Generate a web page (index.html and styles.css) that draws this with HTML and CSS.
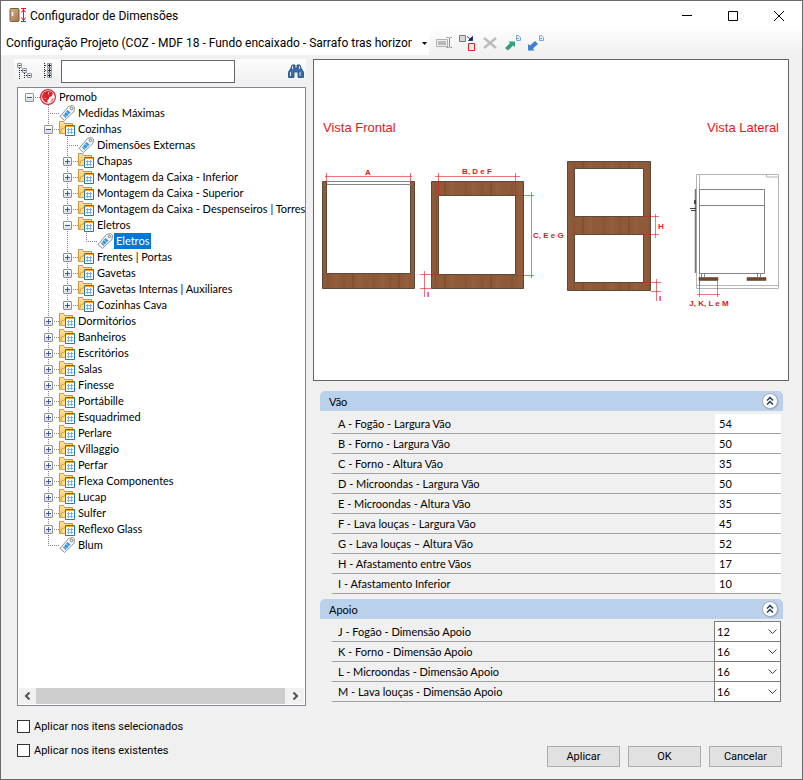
FILE: index.html
```html
<!DOCTYPE html>
<html lang="pt-BR">
<head>
    <meta charset="utf-8">
    <title>Configurador de Dimensões</title>
    <link rel="stylesheet" href="styles.css">
</head>
<body>
    <!-- Shared icons -->
    <svg class="sprites" aria-hidden="true">
        <defs>
            <linearGradient id="folder-fill" x1="0" y1="0" x2="0" y2="1">
                <stop offset="0" stop-color="#ffe79a"/>
                <stop offset="1" stop-color="#f5bd4a"/>
            </linearGradient>
            <linearGradient id="door-fill" x1="0" y1="0" x2="1" y2="1">
                <stop offset="0" stop-color="#d6b995"/>
                <stop offset="1" stop-color="#9c7346"/>
            </linearGradient>
            <symbol id="folder" viewBox="0 0 16 16">
                <path d="M.5 12.500V.500h4l1 2h8v10z" fill="url(#folder-fill)" stroke="#cf963a"/>
                <path d="M1.500 12.500l1.500-5h2l1-1.500h8v6.500z" fill="#ffdf80" stroke="#dba548"/>
                <path d="M6.500 4.500h9v10h-9z" fill="#fff" stroke="#1480bd"/>
                <path d="M7 5.500h8" stroke="#f0a53a"/>
                <path d="M9.500 7v6M12.500 7v6M8 8.500h6M8 11.500h6" stroke="#7fb2e0" fill="none"/>
            </symbol>
            <symbol id="tag" viewBox="0 0 16 16">
                <path d="M9.500 1.500l4-1 2 1.500-.5 4.500L5.500 15.500 1 11.500z" fill="#f3f4f5" stroke="#8f9294"/>
                <path d="M4 10.500l4.500-5.500 3 2.500-5 5.500z" fill="#3294d2"/>
                <path d="M5 9.500l3 2.500M7 7l3 2.500" stroke="#a9d5f1"/>
                <circle cx="12.500" cy="3.500" r="1.200" fill="#fff" stroke="#77797b"/>
            </symbol>
            <symbol id="globe" viewBox="0 0 16 16">
                <circle cx="8" cy="8" r="7.400" fill="#fff" stroke="#d8232c" stroke-width="1.200"/>
                <path d="M8.500 2C4 2 2 4.500 2.200 8.500 3 12 5 13.500 7.500 13.800L7.500 11l1.500-1V8l2.500-.5 1.500-3C12 3 10.500 2 8.500 2z" fill="#d8232c"/>
                <path d="M10 13.300c2.200-.6 3.500-2 3.800-4.300l-1.800.5z" fill="#e8757a"/>
                <path d="M8.500 3v2.500M4.500 9l1.500 1" stroke="#f5b5b8"/>
            </symbol>
            <symbol id="chevrons" viewBox="0 0 18 18">
                <circle cx="9.500" cy="9.500" r="8" fill="#9aa5b8"/>
                <circle cx="9" cy="9" r="7.500" fill="#fff" stroke="#a3aab8"/>
                <path d="M6 8.500l3-3 3 3M6 12.500l3-3 3 3" fill="none" stroke="#1d3768" stroke-width="1.500"/>
            </symbol>
            <pattern id="wood" width="46" height="130" patternUnits="userSpaceOnUse">
                <rect width="46" height="130" fill="#8f5a39"/>
                <path d="M6 0v130M22 0v130" stroke="#8a5534" stroke-width="3"/>
                <path d="M14 0v130M38 0v130" stroke="#935e3d" stroke-width="5"/>
                <path d="M31 0v130" stroke="#855030" stroke-width="2"/>
            </pattern>
        </defs>
    </svg>

    <div class="window">
        <header class="titlebar">
            <svg class="app-icon" viewBox="0 0 18 18">
                <rect x="1" y="1.500" width="9" height="13" rx="1" fill="url(#door-fill)" stroke="#7c5c3c"/>
                <path d="M3.500 5v4" stroke="#f6f6f6" stroke-width="1.500"/>
                <path d="M12 1.500h5M12 14.500h5M14.500 2v12M12.500 5.500l2-3 2 3M12.500 10.500l2 3 2-3" stroke="#e0142c" fill="none"/>
            </svg>
            <h1>Configurador de Dimensões</h1>
            <button class="caption" aria-label="Minimizar"><svg viewBox="0 0 10 10"><path d="M0 4.500h10"/></svg></button>
            <button class="caption" aria-label="Maximizar"><svg viewBox="0 0 10 10"><path d="M.5.5h9v9h-9z"/></svg></button>
            <button class="caption" aria-label="Fechar"><svg viewBox="0 0 10 10"><path d="M0 0l10 10M10 0L0 10"/></svg></button>
        </header>

        <div class="toolbar">
            <div class="project">
                <select aria-label="Configuração">
                    <option>Configuração Projeto (COZ - MDF 18 - Fundo encaixado - Sarrafo tras horizontal)</option>
                </select>
                <svg class="arrow" viewBox="0 0 5 3"><path d="M0 0h5L2.500 3z"/></svg>
            </div>
            <button class="tool" aria-label="Renomear">
                <svg viewBox="0 0 16 16"><path d="M.5 4.500h11v7H.5z" fill="#eee" stroke="#b0b0b0"/><path d="M2 6h8v4H2z" fill="#b9b9b9"/><path d="M10.500 2.500h2l1 .7 1-.7H16M10.500 12.500h2l1-.7 1 .7H16M13.500 3v9" fill="none" stroke="#8f8f8f"/></svg>
            </button>
            <button class="tool" aria-label="Substituir">
                <svg viewBox="0 0 16 16"><path d="M.5.5h6v6h-6z" fill="#ddd5d8" stroke="#777"/><path d="M9.500 8.500h6v7h-6z" fill="#e8e8e8" stroke="#ec1c24"/><path d="M8 1.500l4 3M9.500 5.500h4v-4z" fill="#0c1c72" stroke="#0c1c72" stroke-width=".8"/></svg>
            </button>
            <button class="tool" aria-label="Excluir">
                <svg viewBox="0 0 16 16"><path d="M2 3l12 10M14 3L2 13" stroke="#bdbdbd" stroke-width="2.400"/></svg>
            </button>
            <button class="tool" aria-label="Exportar">
                <svg viewBox="0 0 16 16"><path d="M11.500.500h2l2 2v3h-4z" fill="#eaf3fc" stroke="#7ba7d6"/><path d="M12 3.500h2" stroke="#7ba7d6"/><path d="M0 13l5-5-1.500-1.500H10V12L8 10.500 3 15.500z" fill="#2ea377"/></svg>
            </button>
            <button class="tool" aria-label="Importar">
                <svg viewBox="0 0 16 16"><path d="M11.500.500h2l2 2v3h-4z" fill="#eaf3fc" stroke="#7ba7d6"/><path d="M12 3.500h2" stroke="#7ba7d6"/><path d="M0 15.500V9l2 1.500L7 6l3 3-5 4.500 1.500 2z" fill="#3f7fd0"/></svg>
            </button>
        </div>

        <main>
            <section class="left">
                <div class="searchbar">
                    <button class="tool" aria-label="Recolher tudo">
                        <svg viewBox="0 0 16 16"><path d="M2.500 5v11M7.500 10v6" stroke="#222" stroke-dasharray="1 1"/><path d="M4 7.500h2M9 12.500h2" stroke="#222" stroke-dasharray="1 1"/><path d="M.5.500h4v4h-4zM5.500 5.500h4v4h-4zM10.500 10.500h4v4h-4z" fill="#f2f4f7" stroke="#8e98a6"/><path d="M1.500 2.500h2M6.500 7.500h2M11.500 12.500h2" stroke="#223"/></svg>
                    </button>
                    <button class="tool" aria-label="Expandir tudo">
                        <svg viewBox="0 0 16 16"><path d="M5.500 0v16" stroke="#222" stroke-dasharray="1 1"/><path d="M6 2.500h2M6 7.500h2M6 12.500h2" stroke="#222" stroke-dasharray="1 1"/><path d="M8.500.500h4v4h-4zM8.500 5.500h4v4h-4zM8.500 10.500h4v4h-4z" fill="#f2f4f7" stroke="#8e98a6"/><path d="M9 2.500h3M9 7.500h3M9 12.500h3M10.500 1v3M10.500 6v3M10.500 11v3" stroke="#223"/></svg>
                    </button>
                    <input type="text" class="search" aria-label="Pesquisar">
                    <button class="tool find" aria-label="Localizar">
                        <svg viewBox="0 0 16 16"><path d="M4 2h3v3h2V2h3l1 3 2.500 4v5.500H10V9H6v5.500H.5V9L3 5z" fill="#3d6ba8" stroke="#24477d" stroke-width=".8"/><path d="M4.500 3v3M2.500 9v4M12 9v4M11.500 3v3" stroke="#cfe0f3"/></svg>
                    </button>
                </div>

                <div class="treebox">
                    <ul class="tree">
                        <li class="root">
                            <div class="row"><span class="twig"><button class="toggle open" aria-label="Recolher"></button></span><svg><use href="#globe"/></svg><span class="label">Promob</span></div>
                            <ul>
                                <li><div class="row"><span class="twig"></span><svg><use href="#tag"/></svg><span class="label">Medidas Máximas</span></div></li>
                                <li>
                                    <div class="row"><span class="twig"><button class="toggle open" aria-label="Recolher"></button></span><svg><use href="#folder"/></svg><span class="label">Cozinhas</span></div>
                                    <ul>
                                        <li><div class="row"><span class="twig"></span><svg><use href="#tag"/></svg><span class="label">Dimensões Externas</span></div></li>
                                        <li><div class="row"><span class="twig"><button class="toggle" aria-label="Expandir"></button></span><svg><use href="#folder"/></svg><span class="label">Chapas</span></div></li>
                                        <li><div class="row"><span class="twig"><button class="toggle" aria-label="Expandir"></button></span><svg><use href="#folder"/></svg><span class="label">Montagem da Caixa - Inferior</span></div></li>
                                        <li><div class="row"><span class="twig"><button class="toggle" aria-label="Expandir"></button></span><svg><use href="#folder"/></svg><span class="label">Montagem da Caixa - Superior</span></div></li>
                                        <li><div class="row"><span class="twig"><button class="toggle" aria-label="Expandir"></button></span><svg><use href="#folder"/></svg><span class="label">Montagem da Caixa - Despenseiros | Torres</span></div></li>
                                        <li>
                                            <div class="row"><span class="twig"><button class="toggle open" aria-label="Recolher"></button></span><svg><use href="#folder"/></svg><span class="label">Eletros</span></div>
                                            <ul>
                                                <li><div class="row"><span class="twig"></span><svg><use href="#tag"/></svg><span class="label selected">Eletros</span></div></li>
                                            </ul>
                                        </li>
                                        <li><div class="row"><span class="twig"><button class="toggle" aria-label="Expandir"></button></span><svg><use href="#folder"/></svg><span class="label">Frentes | Portas</span></div></li>
                                        <li><div class="row"><span class="twig"><button class="toggle" aria-label="Expandir"></button></span><svg><use href="#folder"/></svg><span class="label">Gavetas</span></div></li>
                                        <li><div class="row"><span class="twig"><button class="toggle" aria-label="Expandir"></button></span><svg><use href="#folder"/></svg><span class="label">Gavetas Internas | Auxiliares</span></div></li>
                                        <li><div class="row"><span class="twig"><button class="toggle" aria-label="Expandir"></button></span><svg><use href="#folder"/></svg><span class="label">Cozinhas Cava</span></div></li>
                                    </ul>
                                </li>
                                <li><div class="row"><span class="twig"><button class="toggle" aria-label="Expandir"></button></span><svg><use href="#folder"/></svg><span class="label">Dormitórios</span></div></li>
                                <li><div class="row"><span class="twig"><button class="toggle" aria-label="Expandir"></button></span><svg><use href="#folder"/></svg><span class="label">Banheiros</span></div></li>
                                <li><div class="row"><span class="twig"><button class="toggle" aria-label="Expandir"></button></span><svg><use href="#folder"/></svg><span class="label">Escritórios</span></div></li>
                                <li><div class="row"><span class="twig"><button class="toggle" aria-label="Expandir"></button></span><svg><use href="#folder"/></svg><span class="label">Salas</span></div></li>
                                <li><div class="row"><span class="twig"><button class="toggle" aria-label="Expandir"></button></span><svg><use href="#folder"/></svg><span class="label">Finesse</span></div></li>
                                <li><div class="row"><span class="twig"><button class="toggle" aria-label="Expandir"></button></span><svg><use href="#folder"/></svg><span class="label">Portábille</span></div></li>
                                <li><div class="row"><span class="twig"><button class="toggle" aria-label="Expandir"></button></span><svg><use href="#folder"/></svg><span class="label">Esquadrimed</span></div></li>
                                <li><div class="row"><span class="twig"><button class="toggle" aria-label="Expandir"></button></span><svg><use href="#folder"/></svg><span class="label">Perlare</span></div></li>
                                <li><div class="row"><span class="twig"><button class="toggle" aria-label="Expandir"></button></span><svg><use href="#folder"/></svg><span class="label">Villaggio</span></div></li>
                                <li><div class="row"><span class="twig"><button class="toggle" aria-label="Expandir"></button></span><svg><use href="#folder"/></svg><span class="label">Perfar</span></div></li>
                                <li><div class="row"><span class="twig"><button class="toggle" aria-label="Expandir"></button></span><svg><use href="#folder"/></svg><span class="label">Flexa Componentes</span></div></li>
                                <li><div class="row"><span class="twig"><button class="toggle" aria-label="Expandir"></button></span><svg><use href="#folder"/></svg><span class="label">Lucap</span></div></li>
                                <li><div class="row"><span class="twig"><button class="toggle" aria-label="Expandir"></button></span><svg><use href="#folder"/></svg><span class="label">Sulfer</span></div></li>
                                <li><div class="row"><span class="twig"><button class="toggle" aria-label="Expandir"></button></span><svg><use href="#folder"/></svg><span class="label">Reflexo Glass</span></div></li>
                                <li><div class="row"><span class="twig"></span><svg><use href="#tag"/></svg><span class="label">Blum</span></div></li>
                            </ul>
                        </li>
                    </ul>
                    <div class="scrollbar">
                        <button aria-label="Rolar para a esquerda"><svg viewBox="0 0 7 8"><path d="M5.500.500L2 4l3.500 3.500"/></svg></button>
                        <div class="thumb"></div>
                        <button aria-label="Rolar para a direita"><svg viewBox="0 0 7 8"><path d="M1.500.500L5 4 1.500 7.500"/></svg></button>
                    </div>
                </div>

                <div class="checks">
                    <label><input type="checkbox"> Aplicar nos itens selecionados</label>
                    <label><input type="checkbox"> Aplicar nos itens existentes</label>
                </div>
            </section>

            <section class="right">
                <div class="preview">
                    <svg viewBox="314 60 474 320">
                        <g class="caption-text">
                            <text x="323" y="132">Vista Frontal</text>
                            <text x="779" y="132" text-anchor="end">Vista Lateral</text>
                        </g>

                        <!-- Cabinets -->
                        <g class="wood">
                            <path d="M322.500 181.500h4v92h84v-92h4v107h-92z"/>
                            <path fill-rule="evenodd" d="M431.500 181.500h92v107h-92zM438.500 195.500v79h77v-79z"/>
                            <path fill-rule="evenodd" d="M567.500 161.500h83v129h-83zM574.500 168.500v48h69v-48zM574.500 234.500v48h69v-48z"/>
                        </g>
                        <path class="line" d="M327 181.500h84M327 184.500h84"/>

                        <!-- Side view -->
                        <path class="line light" d="M696.500 174.500h82v114h-82zM699.500 174v111M696 285.500h82M766.500 174v3h12"/>
                        <path class="line" d="M699.500 189.500h65v84h-65zM699.500 205.500h65M701.500 273v4M704.500 273v4M757.500 273v4M760.500 273v4"/>
                        <path d="M695.500 189v84" stroke="#777" stroke-width="1.500"/>
                        <path d="M690 208h6v1h-6zM691 210h5v1h-5zM694 200h2v4h-2z" fill="#444"/>
                        <path d="M699 277.500h19v3h-19zM747 277.500h19v3h-19z" fill="#754629" stroke="#53371f" stroke-width=".5"/>

                        <!-- Dimension lines -->
                        <path class="dim" d="M325 176.500h87M326.500 173v11M410.500 173v11
                            M435 176.500h85M438.500 173v22M515.500 173v22
                            M515 195.500h19M515 275.500h19M531.500 192v86
                            M420 274.500h19M420 288.500h11M424.500 271v26
                            M643 216.500h16M643 234.500h16M655.500 214v24
                            M643 282.500h18M651 291.500h10M656.500 279v22
                            M697 294.500h23M699.500 281v16M717.500 281v16"/>
                        <g class="dim-text">
                            <text x="368" y="175" text-anchor="middle">A</text>
                            <text x="477" y="174" text-anchor="middle">B, D e F</text>
                            <text x="533" y="238">C, E e G</text>
                            <text x="427" y="297">I</text>
                            <text x="658" y="229">H</text>
                            <text x="659" y="301">I</text>
                            <text x="709" y="306" text-anchor="middle">J, K, L e M</text>
                        </g>
                    </svg>
                </div>

                <div class="panels">
                    <div class="panel">
                        <div class="panel-head"><h2>Vão</h2><button aria-label="Recolher Vão"><svg><use href="#chevrons"/></svg></button></div>
                        <div class="fields">
                            <div class="field"><label for="a">A - Fogão - Largura Vão</label><input type="text" id="a" value="54"></div>
                            <div class="field"><label for="b">B - Forno - Largura Vão</label><input type="text" id="b" value="50"></div>
                            <div class="field"><label for="c">C - Forno - Altura Vão</label><input type="text" id="c" value="35"></div>
                            <div class="field"><label for="d">D - Microondas - Largura Vão</label><input type="text" id="d" value="50"></div>
                            <div class="field"><label for="e">E - Microondas - Altura Vão</label><input type="text" id="e" value="35"></div>
                            <div class="field"><label for="f">F - Lava louças - Largura Vão</label><input type="text" id="f" value="45"></div>
                            <div class="field"><label for="g">G - Lava louças – Altura Vão</label><input type="text" id="g" value="52"></div>
                            <div class="field"><label for="h">H - Afastamento entre Vãos</label><input type="text" id="h" value="17"></div>
                            <div class="field"><label for="i">I - Afastamento Inferior</label><input type="text" id="i" value="10"></div>
                        </div>
                    </div>
                    <div class="panel">
                        <div class="panel-head"><h2>Apoio</h2><button aria-label="Recolher Apoio"><svg><use href="#chevrons"/></svg></button></div>
                        <div class="fields">
                            <div class="field"><label for="j">J - Fogão - Dimensão Apoio</label><div class="combo"><select id="j"><option>12</option><option>16</option></select><svg viewBox="0 0 9 5"><path d="M.5.500l4 4 4-4"/></svg></div></div>
                            <div class="field"><label for="k">K - Forno - Dimensão Apoio</label><div class="combo"><select id="k"><option>16</option><option>12</option></select><svg viewBox="0 0 9 5"><path d="M.5.500l4 4 4-4"/></svg></div></div>
                            <div class="field"><label for="l">L - Microondas - Dimensão Apoio</label><div class="combo"><select id="l"><option>16</option><option>12</option></select><svg viewBox="0 0 9 5"><path d="M.5.500l4 4 4-4"/></svg></div></div>
                            <div class="field"><label for="m">M - Lava louças - Dimensão Apoio</label><div class="combo"><select id="m"><option>16</option><option>12</option></select><svg viewBox="0 0 9 5"><path d="M.5.500l4 4 4-4"/></svg></div></div>
                        </div>
                    </div>
                </div>

                <div class="buttons">
                    <button>Aplicar</button>
                    <button>OK</button>
                    <button>Cancelar</button>
                </div>
            </section>
        </main>
    </div>
</body>
</html>
```
FILE: styles.css
```css
* {
    box-sizing: border-box;
}
body {
    margin: 0;
    font-family: Roboto, "Liberation Sans", Arial, sans-serif;
    font-size: 11px;
    color: #000;
}
button, input, select {
    font: inherit;
    color: inherit;
    margin: 0;
}
button {
    padding: 0;
    border: 0;
    background: none;
}
svg {
    display: block;
}
.sprites {
    position: absolute;
    width: 0;
    height: 0;
}
.window {
    display: flex;
    flex-direction: column;
    min-height: 100vh;
    border: 1px solid #6b6b6b;
    background: #f0f0f0;
}

/* Title bar */
.titlebar {
    display: flex;
    align-items: center;
    height: 30px;
    padding-left: 8px;
    background: #fff;
}
.app-icon {
    width: 18px;
    height: 18px;
}
.titlebar h1 {
    flex: 1;
    margin: 0 0 0 3px;
    font-size: 12px;
    font-weight: normal;
}
.caption {
    width: 46px;
    height: 30px;
}
.caption svg {
    width: 10px;
    height: 10px;
    margin: 0 auto;
    fill: none;
    stroke: #000;
    overflow: visible;
}

/* Toolbar */
.toolbar {
    display: flex;
    align-items: center;
    gap: 7px;
    height: 24px;
    background: linear-gradient(#fcfcfc, #f0f0f0);
}
.project {
    display: grid;
    align-items: center;
    width: 428px;
    height: 24px;
    background: #fff;
}
.project select {
    grid-area: 1 / 1;
    width: 100%;
    height: 24px;
    padding: 0 17px 0 5px;
    border: 0;
    background: none;
    appearance: none;
    font-size: 12px;
    overflow: hidden;
}
.project .arrow {
    grid-area: 1 / 1;
    justify-self: end;
    width: 5px;
    height: 3px;
    margin-right: 2px;
    pointer-events: none;
}
.tool svg {
    width: 16px;
    height: 16px;
    fill: none;
}

main {
    display: flex;
    flex: 1;
    gap: 7px;
    padding: 4px 13px 12px;
}

/* Left side */
.left {
    display: flex;
    flex-direction: column;
    flex: none;
    width: 292px;
}
.searchbar {
    display: flex;
    align-items: center;
    gap: 6px;
    height: 24px;
    padding: 0 2px 0 3px;
    background: linear-gradient(#fcfcfc, #f0f0f0);
}
.search {
    width: 174px;
    height: 23px;
    padding: 0 4px;
    border: 1px solid #646464;
    background: #fff;
}
.find {
    margin-left: auto;
}
.treebox {
    display: flex;
    flex-direction: column;
    flex: 1;
    margin: 4px 0 0 3px;
    padding: 1px 0;
    border: 1px solid #828790;
    background: #fff;
}
.tree {
    flex: 1;
    padding: 0 0 0 3px;
    overflow: hidden;
}
.tree, .tree ul {
    margin: 0;
    list-style: none;
}
.tree ul {
    padding-left: 19px;
}
.tree li:not(:last-child) {
    background: repeating-linear-gradient(#808080 0 1px, transparent 1px 2px) 8px 0 / 1px 100% no-repeat;
}
.row {
    display: flex;
    height: 16px;
    line-height: 16px;
    white-space: nowrap;
}
.row svg {
    flex: none;
    width: 16px;
    height: 16px;
}
.twig {
    flex: none;
    width: 19px;
    padding: 4px;
    background:
        repeating-linear-gradient(#808080 0 1px, transparent 1px 2px) 8px 0 / 1px 8px no-repeat,
        repeating-linear-gradient(90deg, #808080 0 1px, transparent 1px 2px) 8px 8px / 11px 1px no-repeat;
}
.root > .row .twig {
    background: repeating-linear-gradient(90deg, #808080 0 1px, transparent 1px 2px) 8px 8px / 11px 1px no-repeat;
}
.toggle {
    display: block;
    width: 9px;
    height: 9px;
    border: 1px solid #919191;
    border-radius: 1px;
    background:
        linear-gradient(#3c57a5, #3c57a5) center / 5px 1px no-repeat,
        linear-gradient(#3c57a5, #3c57a5) center / 1px 5px no-repeat,
        linear-gradient(#fff, #dedede);
}
.toggle.open {
    background:
        linear-gradient(#3c57a5, #3c57a5) center / 5px 1px no-repeat,
        linear-gradient(#fff, #dedede);
}
.label {
    margin-left: 1px;
    padding: 0 2px;
}
.label:not(.selected) {
    padding-right: 0;
}
.tree, .panels {
    font-family: Lato, "Liberation Sans", Arial, sans-serif;
}
.selected {
    background: #0078d7;
    color: #fff;
}
.scrollbar {
    display: flex;
    height: 16px;
    margin: 0 1px;
    background: #f0f0f0;
}
.scrollbar button {
    width: 17px;
}
.scrollbar svg {
    width: 7px;
    height: 8px;
    margin: 0 auto;
    fill: none;
    stroke: #505050;
    stroke-width: 2;
}
.thumb {
    flex: 1;
    margin-right: 2px;
    background: #cdcdcd;
}
.checks {
    display: flex;
    flex-direction: column;
    gap: 8px;
    padding: 12px 0 9px 3px;
}
.checks label {
    display: flex;
    align-items: center;
    gap: 4px;
    height: 16px;
}
.checks input {
    width: 13px;
    height: 13px;
    border: 1px solid #333;
    background: #fff;
    appearance: none;
}
.checks input:checked {
    background: #0078d7;
}

/* Right side */
.right {
    display: flex;
    flex-direction: column;
    flex: 1;
    min-width: 0;
}
.preview {
    border: 1px solid #646464;
    background: #fff;
    font-family: "Liberation Sans", Arial, sans-serif;
}
.preview svg {
    width: 100%;
    height: auto;
}
.caption-text {
    font-size: 13px;
    fill: #e8141c;
}
.wood {
    fill: url(#wood);
    stroke: #5b4a3c;
}
.line {
    fill: none;
    stroke: #858585;
}
.light {
    stroke: #b4b4b4;
}
.dim {
    fill: none;
    stroke: #e8141c;
    stroke-opacity: .6;
}
.dim-text {
    font-size: 8px;
    font-weight: bold;
    fill: #e8141c;
}
.panels {
    display: flex;
    flex-direction: column;
    flex: 1;
    gap: 5px;
    padding: 10px 6px 0 7px;
}
.panel-head {
    display: flex;
    align-items: center;
    justify-content: space-between;
    height: 20px;
    padding: 0 4px 0 9px;
    border-radius: 5px 5px 0 0;
    background: #b9d1ea;
}
.panel-head h2 {
    margin: 0;
    font-size: 11px;
    font-weight: normal;
}
.panel-head svg {
    width: 18px;
    height: 18px;
}
.fields {
    padding: 3px 2px 0 12px;
}
.field {
    display: flex;
    height: 20px;
    border-bottom: 1px solid #a0a0a0;
}
.field label {
    flex: 1;
    padding-left: 6px;
    line-height: 20px;
}
.field input {
    width: 66px;
    height: 19px;
    padding: 0 4px;
    border: 0;
    background: #fff;
}
.combo {
    display: grid;
    align-items: center;
    width: 67px;
    height: 21px;
    margin-top: -1px;
}
.combo select {
    grid-area: 1 / 1;
    width: 100%;
    height: 21px;
    padding: 0 2px;
    border: 1px solid #7a7a7a;
    border-radius: 0;
    background: #fff;
    appearance: none;
}
.combo svg {
    grid-area: 1 / 1;
    justify-self: end;
    width: 9px;
    height: 5px;
    margin-right: 4px;
    fill: none;
    stroke: #444;
    pointer-events: none;
}
.buttons {
    display: flex;
    justify-content: flex-end;
    gap: 8px;
    padding-right: 7px;
}
.buttons button {
    width: 73px;
    height: 21px;
    border: 1px solid #adadad;
    background: #e1e1e1;
}
```
